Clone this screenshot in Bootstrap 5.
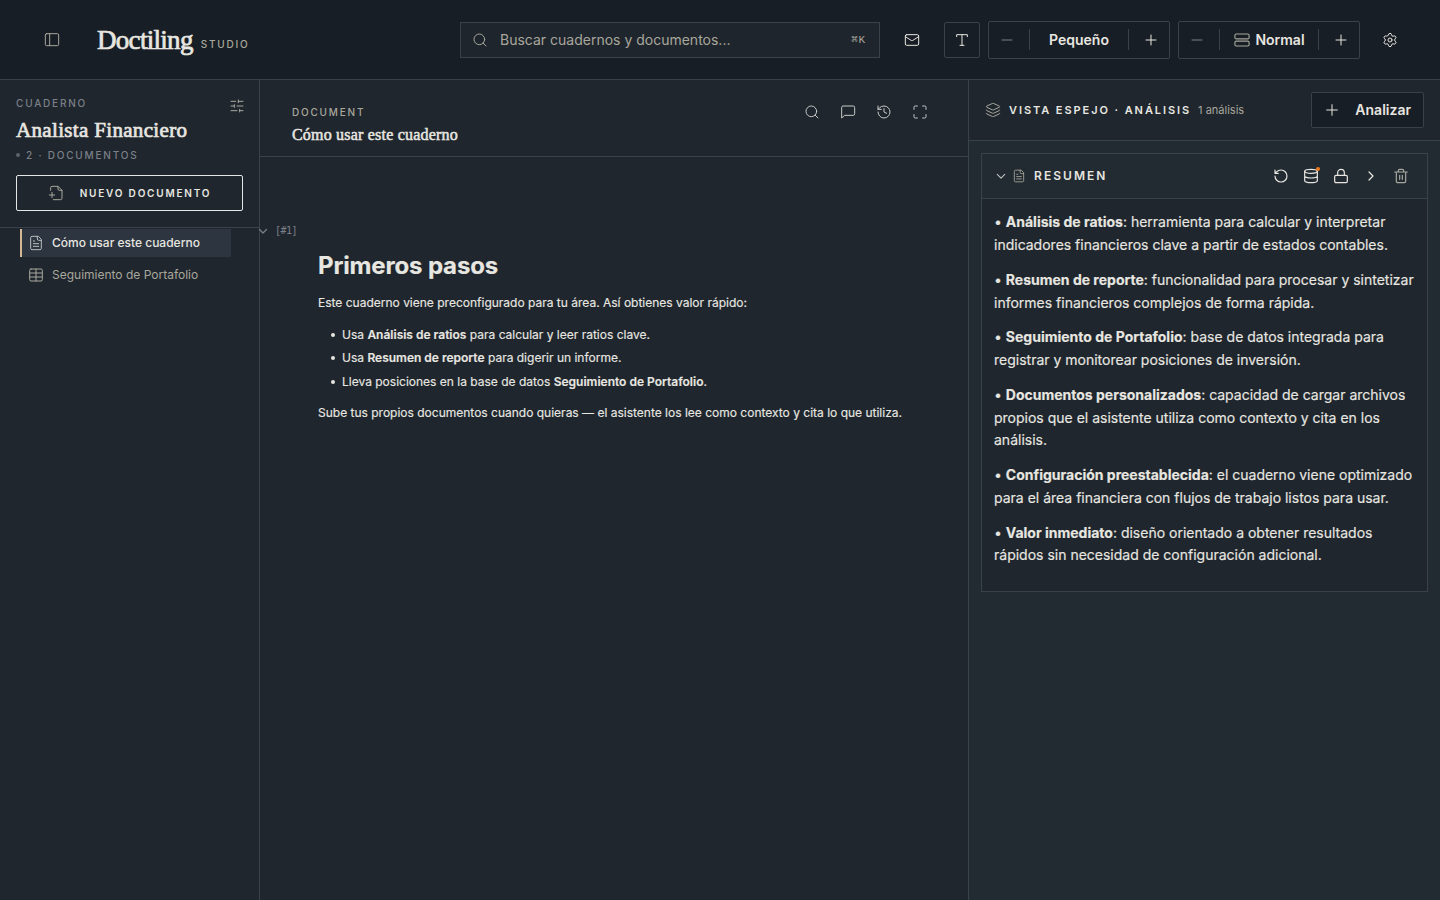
<!DOCTYPE html>
<html lang="es" data-bs-theme="dark">
<head>
<meta charset="utf-8">
<meta name="viewport" content="width=device-width, initial-scale=1">
<title>Doctiling Studio</title>
<link href="https://cdn.jsdelivr.net/npm/bootstrap@5.3.0/dist/css/bootstrap.min.css" rel="stylesheet">
<style>
:root{--ink:#e8e6e0;--line:#38424c;--bg:#1f262e;--top:#181e25;--soft:#222a32;--mute:#7b8087;--tan:#a8a79c}
body{font-family:Inter,sans-serif;background:var(--bg);color:var(--ink);font-size:14px;line-height:20px}
svg{fill:none;stroke:currentColor;stroke-width:1.5;stroke-linecap:round;stroke-linejoin:round;flex:none;display:block}
.serif{font-family:"Liberation Serif",serif;-webkit-text-stroke:.7px currentColor;white-space:nowrap}
.hair,.hair-b,.hair-e{border:0 solid var(--line)}
.hair{border-width:1px}.hair-b{border-bottom-width:1px}.hair-e{border-right-width:1px}
.topbar{height:80px;background:var(--top);padding:0 42px 0 44px}
.logo{font-size:27px;line-height:32px;margin-left:37px;letter-spacing:-.7px}
.caps{font-size:10px;line-height:14px;letter-spacing:1.8px;text-transform:uppercase;white-space:nowrap;font-weight:500}
.search{width:420px;height:36px;background:#1f252d;padding:0 13px 0 11px;color:var(--tan)}
.kbd-hint{font:11px/14px "Liberation Mono","DejaVu Sans Mono",monospace;letter-spacing:.8px}
.ctl{height:38px;width:182px;border-radius:2px}
.ctl .sep{width:1px;height:21px;background:var(--line)}
.ctl .stp{width:40px}.ctl .val{width:98px}
.sq{width:36px;height:36px;border-radius:2px}
.gear{margin-left:22px}
.side{width:260px}.mid{width:709px}
.side-head{height:148px;padding:16px 16px 0}
.side-top{height:24px}
.tune{margin:2px -2px 0 0}
.nbname{font-size:21px;line-height:24px;margin-top:-2px;letter-spacing:.33px}
.cnt{margin:6px 0 13px}
.bul{width:4px;height:4px;border-radius:50%;background:#5c636b;margin-right:6px}
.newdoc{height:36px;border:1px solid #e4e6e8;border-radius:2px;background:none;color:var(--ink);width:227px}
.newlbl{margin-left:16px}
.docs{padding:1px 28px 0 20px}
.doc{height:28px;font-size:12px;padding-left:6px;border-left:2px solid transparent;color:var(--tan)}
.doc.on{background:#2d3640;border-left-color:#d4b894;color:var(--ink);font-weight:500}
.doc.on svg{color:#b9bcbd}
.mid-head{height:77px;padding:25px 40px 0 32px}
.doctitle{font-size:16px;line-height:20px;margin-top:6px;letter-spacing:.2px;-webkit-text-stroke-width:.5px}
.icons20{gap:20px;margin-top:-1px;color:#c9cac7}
.mute{color:var(--mute)}.tan{color:var(--tan)}
.anchor{margin-top:66px;height:16px;margin-left:-3px}
.anchor svg{stroke-width:2.5}
.tag{font:10px/14px "DejaVu Sans Mono",monospace;margin-left:6px;letter-spacing:-.5px}
.article{padding:11px 0 0 58px;font-size:12px;line-height:19.5px;-webkit-text-stroke:.15px currentColor}
.article h1{font-size:24px;line-height:32px;font-weight:700;margin:0;letter-spacing:-.15px;color:var(--ink)}
.article .intro{margin:11px 0 12px}
.article ul{padding-left:24px;margin:12px 0;list-style:none}
.article li{margin-bottom:4px;position:relative}
.article li::before{content:"";position:absolute;left:-11px;top:8px;width:4px;height:4px;border-radius:50%;background:var(--ink)}
.right{background:var(--soft)}
.right-head{height:61px;background:var(--bg);padding:0 16px}
.vista{font-size:11px;letter-spacing:1.93px}
.resumen{font-size:12px;letter-spacing:2.05px}
.vista,.resumen{font-weight:600}
.count{font-size:11px;margin-left:7px}
.analyze{width:113px;height:36px;background:var(--top);border-radius:2px;color:var(--ink);font-weight:600;padding:0 12px}
.panel{margin:12px;height:439px;background:var(--bg)}
.panel-head{height:45px;background:var(--soft);padding:0 18px 0 14px}
.panel-head .fold{stroke-width:2.6;color:#c0c2c0}
.panel-head .page{margin:0 8px 0 6px}
.panel-body{padding:12.3px 12px;line-height:22.75px;-webkit-text-stroke:.15px currentColor}
.panel-body p{margin:0 0 12px}
.panel-body b{font-weight:700}
.acts{gap:14px}
.acts svg{stroke-width:1.8}
.dot{position:absolute;width:4px;height:4px;border-radius:50%;background:#f07a1a;right:-1px;top:-1px}
b{font-weight:600}
.ln{white-space:nowrap}
</style>
</head>
<body class="vh-100 overflow-hidden d-flex flex-column">
<header class="topbar hair-b d-flex align-items-center flex-shrink-0">
  <svg class="tan" width="16" height="16" viewBox="0 0 24 24"><rect x="2" y="2.500" width="20" height="18" rx="2"/><path d="M8.500 2.500v18"/></svg>
  <span class="serif logo">Doctiling</span>
  <span class="caps tan ms-2 mt-2">Studio</span>
  <div class="search hair d-flex align-items-center ms-auto">
    <svg width="16" height="16" viewBox="0 0 24 24"><circle cx="11" cy="11" r="8"/><path d="m21 21-4.300-4.300"/></svg>
    <span class="ms-2 ps-1 flex-grow-1">Buscar cuadernos y documentos...</span><span class="kbd-hint">⌘K</span>
  </div>
  <svg class="ms-4" width="16" height="16" viewBox="0 0 24 24"><rect x="2" y="4" width="20" height="16" rx="2"/><path d="m22 7-8.970 5.700a1.940 1.940 0 0 1-2.060 0L2 7"/></svg>
  <div class="sq hair d-flex align-items-center justify-content-center ms-4"><svg width="16" height="16" viewBox="0 0 24 24"><path d="M4 7V4h16v3M9 20h6M12 4v16"/></svg></div>
  <div class="ctl hair d-flex align-items-center ms-2">
    <div class="stp d-flex justify-content-center pe-1 mute"><svg width="16" height="16" viewBox="0 0 24 24"><path d="M4.500 12h15"/></svg></div><span class="sep"></span>
    <div class="val text-center fw-semibold">Pequeño</div><span class="sep"></span>
    <div class="stp d-flex justify-content-center ps-1"><svg width="16" height="16" viewBox="0 0 24 24"><path d="M4.500 12h15M12 4.500v15"/></svg></div>
  </div>
  <div class="ctl hair d-flex align-items-center ms-2">
    <div class="stp d-flex justify-content-center pe-1 mute"><svg width="16" height="16" viewBox="0 0 24 24"><path d="M4.500 12h15"/></svg></div><span class="sep"></span>
    <div class="val fw-semibold d-flex align-items-center justify-content-center"><svg class="tan me-1" width="18" height="18" viewBox="0 0 24 24"><rect x="2.500" y="4" width="19" height="6.500" rx="2"/><rect x="2.500" y="13.500" width="19" height="6.500" rx="2"/></svg><span>Normal</span></div><span class="sep"></span>
    <div class="stp d-flex justify-content-center ps-1"><svg width="16" height="16" viewBox="0 0 24 24"><path d="M4.500 12h15M12 4.500v15"/></svg></div>
  </div>
  <svg class="gear" width="16" height="16" viewBox="0 0 24 24"><path d="M9.670 4.140a2.340 2.340 0 0 1 4.660 0 2.340 2.340 0 0 0 3.320 1.910 2.340 2.340 0 0 1 2.330 4.030 2.340 2.340 0 0 0 0 3.830 2.340 2.340 0 0 1-2.330 4.030 2.340 2.340 0 0 0-3.320 1.910 2.340 2.340 0 0 1-4.660 0 2.340 2.340 0 0 0-3.320-1.910 2.340 2.340 0 0 1-2.330-4.030 2.340 2.340 0 0 0 0-3.830 2.340 2.340 0 0 1 2.330-4.030 2.340 2.340 0 0 0 3.320-1.910"/><circle cx="12" cy="12" r="3"/></svg>
</header>
<main class="d-flex flex-grow-1">
  <aside class="side hair-e flex-shrink-0">
    <div class="side-head hair-b">
      <div class="side-top d-flex justify-content-between"><span class="caps mute">Cuaderno</span>
        <svg class="tan tune" width="16" height="16" viewBox="0 0 24 24"><path d="M10 5H3M12 19H3M14 3v4M16 17v4M21 12h-9M21 19h-5M21 5h-7M8 10v4M8 12H3"/></svg></div>
      <div class="serif nbname">Analista Financiero</div>
      <div class="caps mute cnt d-flex align-items-center"><span class="bul"></span>2 · Documentos</div>
      <button class="newdoc d-flex align-items-center justify-content-center p-0"><svg class="tan" width="16" height="16" viewBox="0 0 24 24"><path d="M4 8V4a2 2 0 0 1 2-2h9l6 6v12a2 2 0 0 1-2 2H8M15 2v4a2 2 0 0 0 2 2h4M2 15h8M6 11v8"/></svg><span class="caps fw-semibold newlbl">Nuevo documento</span></button>
    </div>
    <div class="docs">
      <div class="doc on d-flex align-items-center"><svg class="me-2" width="16" height="16" viewBox="0 0 24 24"><path d="M15 2H6a2 2 0 0 0-2 2v16a2 2 0 0 0 2 2h12a2 2 0 0 0 2-2V7ZM14 2v4a2 2 0 0 0 2 2h4M10 9H8M16 13H8M16 17H8"/></svg><span>Cómo usar este cuaderno</span></div>
      <div class="doc d-flex align-items-center mt-1"><svg class="me-2" width="16" height="16" viewBox="0 0 24 24"><rect x="2.500" y="3" width="19" height="18" rx="2"/><path d="M12 3v18M3 9h18M3 15h18"/></svg><span>Seguimiento de Portafolio</span></div>
    </div>
  </aside>
  <section class="mid hair-e flex-shrink-0">
    <div class="mid-head hair-b d-flex justify-content-between">
      <div><div class="caps tan">Document</div><div class="serif doctitle">Cómo usar este cuaderno</div></div>
      <div class="d-flex icons20">
        <svg width="16" height="16" viewBox="0 0 24 24"><circle cx="11" cy="11" r="8"/><path d="m21 21-4.300-4.300"/></svg>
        <svg width="16" height="16" viewBox="0 0 24 24"><path d="M22 15a2 2 0 0 1-2 2H7l-4.500 4V5a2 2 0 0 1 2-2H20a2 2 0 0 1 2 2z"/></svg>
        <svg width="16" height="16" viewBox="0 0 24 24"><path d="M3 12a9 9 0 1 0 9-9 9.750 9.750 0 0 0-6.740 2.740L3 8M3 3v5h5M12 7v5l4 2"/></svg>
        <svg width="16" height="16" viewBox="0 0 24 24"><path d="M8 3H5a2 2 0 0 0-2 2v3M21 8V5a2 2 0 0 0-2-2h-3M3 16v3a2 2 0 0 0 2 2h3M16 21h3a2 2 0 0 0 2-2v-3"/></svg>
      </div>
    </div>
    <div class="d-flex align-items-center mute anchor"><svg width="12" height="12" viewBox="0 0 24 24"><path d="m5 9 7 7 7-7"/></svg><span class="tag">[#1]</span></div>
    <div class="article">
      <h1>Primeros pasos</h1>
      <p class="ln intro">Este cuaderno viene preconfigurado para tu área. Así obtienes valor rápido:</p>
      <ul><li>Usa <b>Análisis de ratios</b> para calcular y leer ratios clave.</li><li>Usa <b>Resumen de reporte</b> para digerir un informe.</li><li>Lleva posiciones en la base de datos <b>Seguimiento de Portafolio</b>.</li></ul>
      <p class="ln">Sube tus propios documentos cuando quieras — el asistente los lee como contexto y cita lo que utiliza.</p>
    </div>
  </section>
  <section class="right flex-grow-1">
    <div class="right-head hair-b d-flex align-items-center">
      <svg class="tan" width="16" height="16" viewBox="0 0 24 24"><path d="M12.830 2.180a2 2 0 0 0-1.660 0L2.600 6.080a1 1 0 0 0 0 1.830l8.580 3.910a2 2 0 0 0 1.660 0l8.580-3.900a1 1 0 0 0 0-1.830zM2 12a1 1 0 0 0 .58.910l8.600 3.910a2 2 0 0 0 1.650 0l8.580-3.900A1 1 0 0 0 22 12M2 17a1 1 0 0 0 .58.910l8.600 3.910a2 2 0 0 0 1.650 0l8.580-3.900A1 1 0 0 0 22 17"/></svg>
      <span class="caps vista ms-2">Vista espejo · Análisis</span><span class="tan count">1 análisis</span>
      <div class="analyze hair d-flex align-items-center justify-content-between ms-auto"><svg width="16" height="16" viewBox="0 0 24 24"><path d="M4 12h16M12 4v16"/></svg><span>Analizar</span></div>
    </div>
    <div class="panel hair">
      <div class="panel-head hair-b d-flex align-items-center">
        <svg class="fold" width="10" height="10" viewBox="0 0 24 24"><path d="m3 8 9 9 9-9"/></svg>
        <svg class="tan page" width="14" height="14" viewBox="0 0 24 24"><path d="M15 2H6a2 2 0 0 0-2 2v16a2 2 0 0 0 2 2h12a2 2 0 0 0 2-2V7ZM14 2v4a2 2 0 0 0 2 2h4M10 9H8M16 13H8M16 17H8"/></svg>
        <span class="caps resumen">Resumen</span>
        <div class="d-flex ms-auto acts">
          <svg width="16" height="16" viewBox="0 0 24 24"><path d="M3 12a9 9 0 1 0 9-9 9.750 9.750 0 0 0-6.740 2.740L3 8M3 3v5h5"/></svg>
          <div class="position-relative"><svg width="16" height="16" viewBox="0 0 24 24"><ellipse cx="12" cy="5" rx="9.500" ry="3"/><path d="M2.500 5v14a9.500 3 0 0 0 19 0V5M2.500 12a9.500 3 0 0 0 19 0"/></svg><span class="dot"></span></div>
          <svg width="16" height="16" viewBox="0 0 24 24"><rect x="2.500" y="11" width="19" height="11" rx="2"/><path d="M7 11V7a5 5 0 0 1 10 0v4"/></svg>
          <svg width="16" height="16" viewBox="0 0 24 24"><path d="m9 18 6-6-6-6"/></svg>
          <svg class="tan" width="16" height="16" viewBox="0 0 24 24"><path d="M2.500 6h19M19 6v14a2 2 0 0 1-2 2H7a2 2 0 0 1-2-2V6M8 6V4a2 2 0 0 1 2-2h4a2 2 0 0 1 2 2v2M10 11v6M14 11v6"/></svg>
        </div>
      </div>
      <div class="panel-body">
        <p class="ln">• <b>Análisis de ratios</b>: herramienta para calcular y interpretar<br>indicadores financieros clave a partir de estados contables.</p>
        <p class="ln">• <b>Resumen de reporte</b>: funcionalidad para procesar y sintetizar<br>informes financieros complejos de forma rápida.</p>
        <p class="ln">• <b>Seguimiento de Portafolio</b>: base de datos integrada para<br>registrar y monitorear posiciones de inversión.</p>
        <p class="ln">• <b>Documentos personalizados</b>: capacidad de cargar archivos<br>propios que el asistente utiliza como contexto y cita en los<br>análisis.</p>
        <p class="ln">• <b>Configuración preestablecida</b>: el cuaderno viene optimizado<br>para el área financiera con flujos de trabajo listos para usar.</p>
        <p class="ln">• <b>Valor inmediato</b>: diseño orientado a obtener resultados<br>rápidos sin necesidad de configuración adicional.</p>
      </div>
    </div>
  </section>
</main>
<script src="https://cdn.jsdelivr.net/npm/bootstrap@5.3.0/dist/js/bootstrap.bundle.min.js"></script>
</body>
</html>
